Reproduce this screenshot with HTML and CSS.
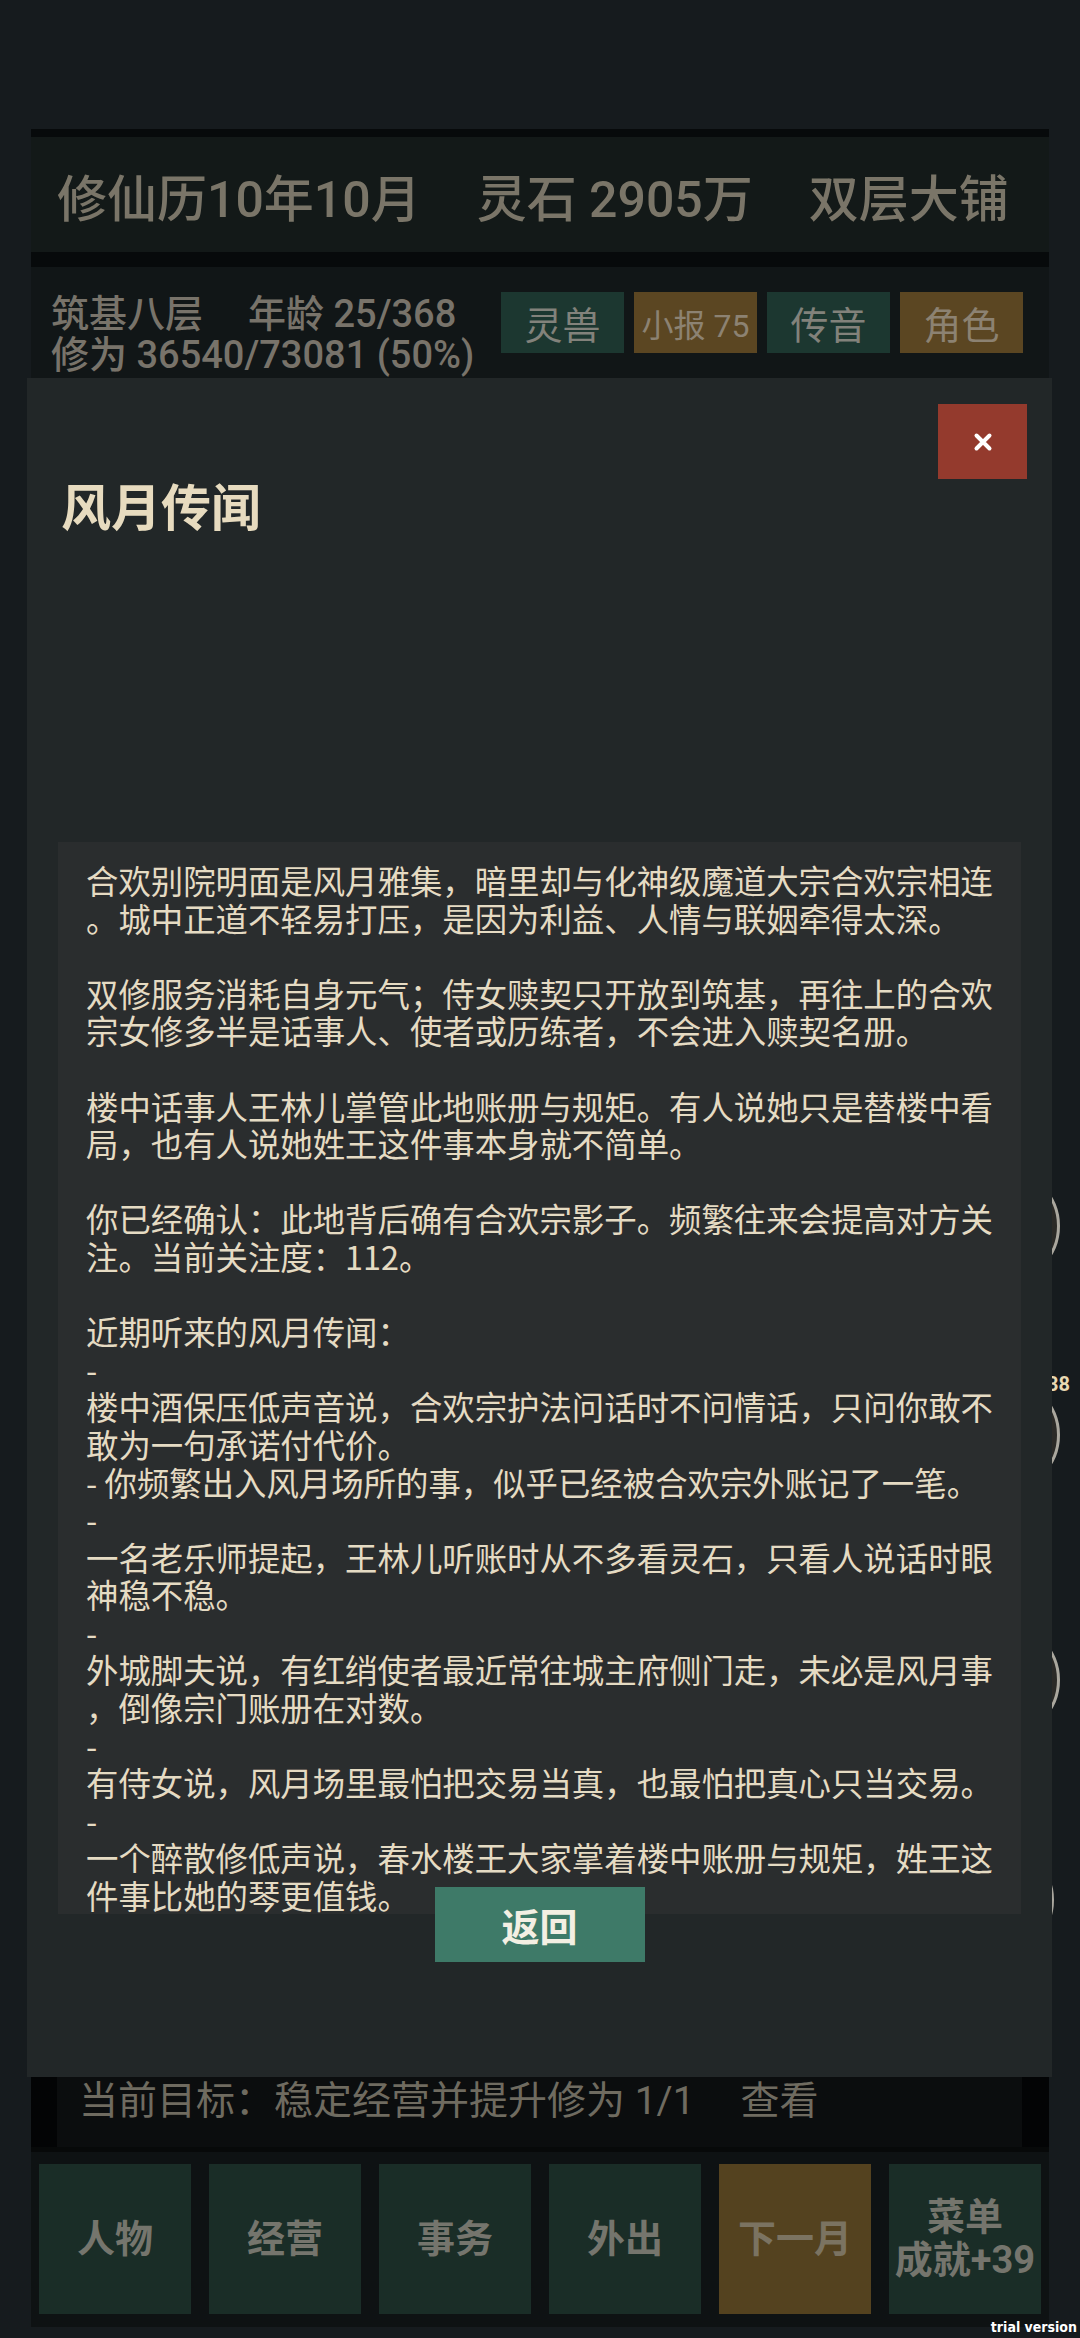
FILE: index.html
```html
<!DOCTYPE html>
<html lang="zh-CN">
<head>
<meta charset="UTF-8" />
<meta name="viewport" content="width=device-width, initial-scale=1" />
<title>风月传闻</title>
<link rel="stylesheet" href="styles.css">
</head>
<body>

<div class="app">
  <header class="topbar">
    <span>修仙历10年10月</span>
    <span>灵石 2905万</span>
    <span>双层大铺</span>
  </header>

  <section class="status">
    <div class="status-text">
      <div>筑基八层<span class="gap"></span>年龄 25/368</div>
      <div>修为 36540/73081 (50%)</div>
    </div>
    <div class="quick">
      <button class="chip green">灵兽</button>
      <button class="chip gold small">小报 75</button>
      <button class="chip green">传音</button>
      <button class="chip gold">角色</button>
    </div>
  </section>

  <!-- shop floor, hidden under the dialog; only the round buttons peek out on the right -->
  <div class="floor">
    <span class="orb orb-1"></span>
    <span class="badge">38</span>
    <span class="orb orb-2"></span>
    <span class="orb orb-3"></span>
    <span class="orb orb-4"></span>
  </div>

  <div class="goal">
    <div class="goal-inner">当前目标：稳定经营并提升修为 1/1<span class="gap"></span>查看</div>
  </div>

  <nav class="tabs">
    <button class="tab">人物</button>
    <button class="tab">经营</button>
    <button class="tab">事务</button>
    <button class="tab">外出</button>
    <button class="tab next">下一月</button>
    <button class="tab">菜单<br>成就+39</button>
  </nav>
</div>

<div class="modal">
  <button class="modal-close" aria-label="关闭">
    <svg width="20" height="20" viewBox="0 0 20 20"><path d="M3.5 3.5 L16.5 16.5 M16.5 3.5 L3.5 16.5" stroke="#fff" stroke-width="4" stroke-linecap="round"/></svg>
  </button>
  <h2 class="modal-title">风月传闻</h2>
  <div class="story">合欢别院明面是风月雅集，暗里却与化神级魔道大宗合欢宗相连
。城中正道不轻易打压，是因为利益、人情与联姻牵得太深。

双修服务消耗自身元气；侍女赎契只开放到筑基，再往上的合欢
宗女修多半是话事人、使者或历练者，不会进入赎契名册。

楼中话事人王林儿掌管此地账册与规矩。有人说她只是替楼中看
局，也有人说她姓王这件事本身就不简单。

你已经确认：此地背后确有合欢宗影子。频繁往来会提高对方关
注。当前关注度：112。

近期听来的风月传闻：
-
楼中酒保压低声音说，合欢宗护法问话时不问情话，只问你敢不
敢为一句承诺付代价。
- 你频繁出入风月场所的事，似乎已经被合欢宗外账记了一笔。
-
一名老乐师提起，王林儿听账时从不多看灵石，只看人说话时眼
神稳不稳。
-
外城脚夫说，有红绡使者最近常往城主府侧门走，未必是风月事
，倒像宗门账册在对数。
-
有侍女说，风月场里最怕把交易当真，也最怕把真心只当交易。
-
一个醉散修低声说，春水楼王大家掌着楼中账册与规矩，姓王这
件事比她的琴更值钱。</div>
  <button class="back-btn">返回</button>
</div>

<div class="watermark">trial version</div>

</body>
</html>
```

FILE: styles.css
```css
* {
  box-sizing: border-box;
}
body {
  margin: 0;
  width: 1080px;
  height: 2338px;
  position: relative;
  overflow: hidden;
  background: #161b1e;
  font-family: Roboto, "Noto Sans CJK SC", sans-serif;
}
button {
  border: none;
  padding: 0;
  font-family: inherit;
  cursor: pointer;
}
.app {
  width: 1018px;
  height: 2327px;
  margin-left: 31px;
  padding-top: 129px;
  display: flex;
  flex-direction: column;
}
.topbar {
  height: 138px;
  flex: none;
  display: flex;
  align-items: center;
  gap: 56px;
  padding-left: 26px;
  background: #131918;
  border-top: 8px solid #070a0b;
  border-bottom: 15px solid #070a0b;
  color: #7a7568;
  font-size: 50px;
  font-weight: 500;
  white-space: nowrap;
}
.status {
  height: 150px;
  flex: none;
  display: flex;
  align-items: flex-start;
  padding: 25px 26px 0 20px;
  background: #111617;
}
.status-text {
  margin-top: 2px;
  font-size: 38px;
  font-weight: 500;
  line-height: 41px;
  color: #78736a;
  white-space: nowrap;
}
.status-text .gap {
  display: inline-block;
  width: 45px;
}
.quick {
  margin-left: auto;
  display: flex;
  gap: 10px;
}
.chip {
  width: 123px;
  height: 61px;
  font-size: 38px;
  color: #82827b;
}
.chip.green {
  background: #1c3730;
}
.chip.gold {
  background: #5b4622;
  color: #8c8272;
}
.chip.small {
  font-size: 32px;
}
.floor {
  flex: 1;
  position: relative;
  background: #111617;
}
.orb {
  position: absolute;
  width: 114px;
  height: 114px;
  border-radius: 50%;
  border: 3px solid #aaa79e;
  background: #2b2a27;
}
.orb-1 { left: 915px; top: 752px; }
.orb-2 { left: 915px; top: 961px; }
.orb-3 { left: 915px; top: 1206px; }
.orb-4 { left: 909px; top: 1426px; }
.badge {
  position: absolute;
  left: 1016px;
  top: 955px;
  font-size: 20px;
  font-weight: 700;
  color: #e8d8b2;
}
.goal {
  height: 70px;
  flex: none;
  padding: 0 27px 0 26px;
  background: #030405;
}
.goal-inner {
  height: 100%;
  padding-left: 22px;
  background: #0b0d0e;
  color: #6f6b60;
  font-size: 39px;
  line-height: 48px;
  white-space: nowrap;
}
.goal-inner .gap {
  display: inline-block;
  width: 46px;
}
.tabs {
  height: 180px;
  flex: none;
  display: grid;
  grid-template-columns: repeat(6, 1fr);
  gap: 18px;
  padding: 12px 8px 13px;
  background: #0e1213;
  border-top: 5px solid #070909;
}
.tab {
  height: 150px;
  background: #1a2d27;
  color: #75756d;
  font-size: 38px;
  font-weight: 700;
  line-height: 43px;
}
.tab.next {
  background: #54421f;
  color: #7b7361;
}
.modal {
  position: absolute;
  top: 378px;
  left: 27px;
  width: 1025px;
  height: 1699px;
  display: flex;
  flex-direction: column;
  padding: 26px 31px 0;
  background: #222728;
}
.modal-close {
  align-self: flex-end;
  margin-right: -6px;
  width: 89px;
  height: 75px;
  display: flex;
  align-items: center;
  justify-content: center;
  background: #943a2d;
}
.modal-title {
  margin: 0;
  padding-left: 3px;
  font-size: 50px;
  line-height: 60px;
  font-weight: 700;
  color: #e7dbbf;
}
.story {
  margin-top: 303px;
  padding: 19px 24px 0 28px;
  background: #2a2d2e;
  font-family: "Noto Sans CJK SC", sans-serif;
  font-size: 32.4px;
  line-height: 37.6px;
  color: #e5dbc3;
  white-space: pre;
}
.back-btn {
  align-self: center;
  margin-top: -27px;
  width: 210px;
  height: 75px;
  background: #3e7a68;
  color: #f3efe3;
  font-size: 38px;
  font-weight: 700;
}
.watermark {
  position: absolute;
  right: 3px;
  top: 2319px;
  font-family: "Liberation Sans Narrow", "DejaVu Sans Condensed", sans-serif;
  font-size: 14px;
  font-weight: 700;
  color: #ffffff;
}
```
